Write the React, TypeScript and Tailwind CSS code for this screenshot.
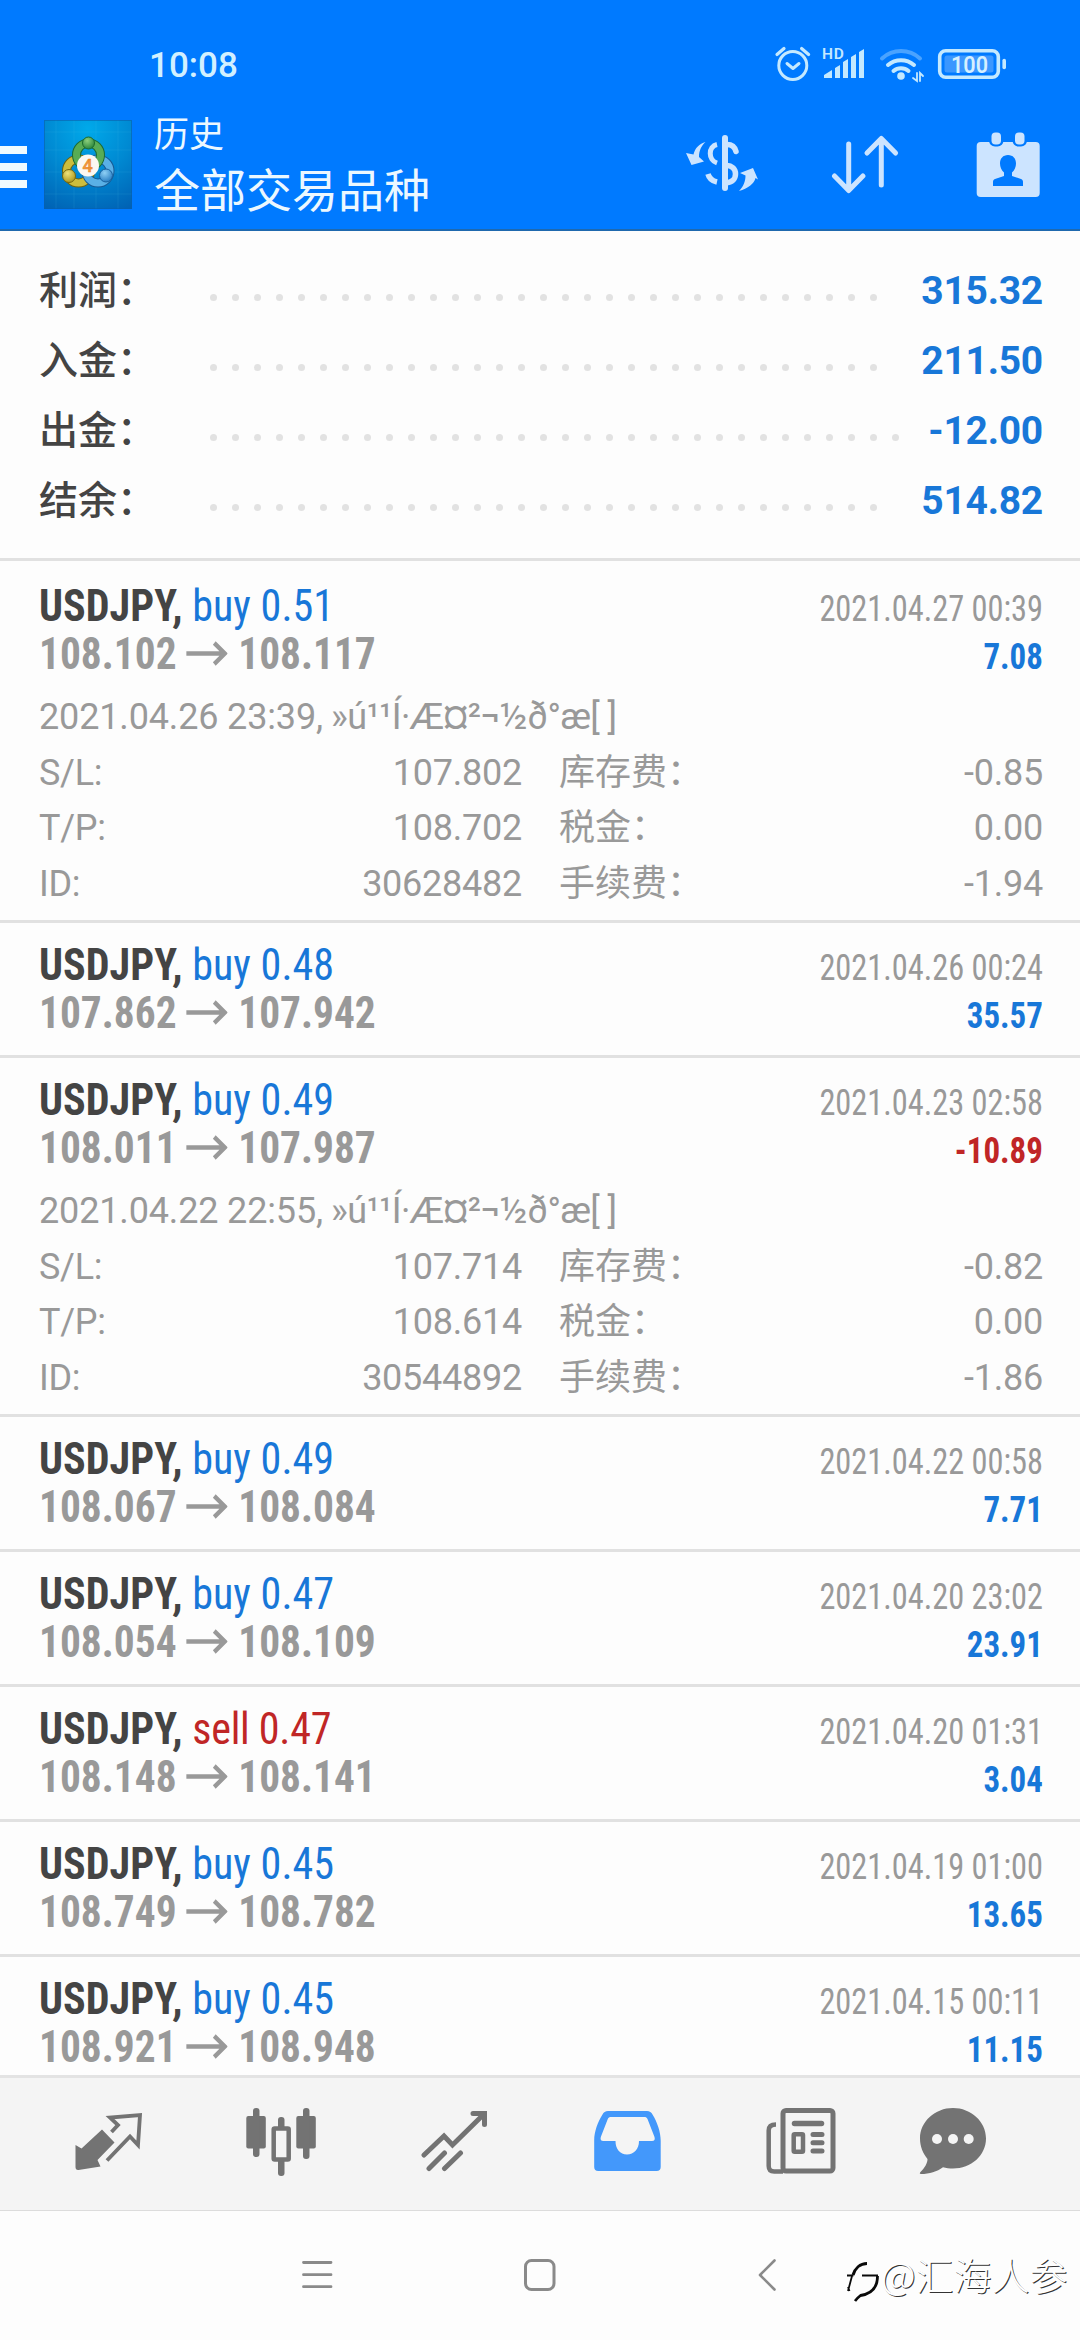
import React from 'react';

type Details = {
  opened: string;
  sl: string;
  tp: string;
  id: string;
  swap: string;
  tax: string;
  commission: string;
};

type Deal = {
  symbol: string;
  side: 'buy' | 'sell';
  volume: string;
  open: string;
  close: string;
  time: string;
  profit: string;
  details?: Details;
};

const COMMENT = '»ú¹¹Í·Æ¤²¬½ð°æ[ ]';

const summary = [
  { label: '利润：', value: '315.32', dots: 31 },
  { label: '入金：', value: '211.50', dots: 31 },
  { label: '出金：', value: '-12.00', dots: 32 },
  { label: '结余：', value: '514.82', dots: 31 },
];

const deals: Deal[] = [
  {
    symbol: 'USDJPY', side: 'buy', volume: '0.51', open: '108.102', close: '108.117', time: '2021.04.27 00:39', profit: '7.08',
    details: { opened: '2021.04.26 23:39,', sl: '107.802', tp: '108.702', id: '30628482', swap: '-0.85', tax: '0.00', commission: '-1.94' },
  },
  { symbol: 'USDJPY', side: 'buy', volume: '0.48', open: '107.862', close: '107.942', time: '2021.04.26 00:24', profit: '35.57' },
  {
    symbol: 'USDJPY', side: 'buy', volume: '0.49', open: '108.011', close: '107.987', time: '2021.04.23 02:58', profit: '-10.89',
    details: { opened: '2021.04.22 22:55,', sl: '107.714', tp: '108.614', id: '30544892', swap: '-0.82', tax: '0.00', commission: '-1.86' },
  },
  { symbol: 'USDJPY', side: 'buy', volume: '0.49', open: '108.067', close: '108.084', time: '2021.04.22 00:58', profit: '7.71' },
  { symbol: 'USDJPY', side: 'buy', volume: '0.47', open: '108.054', close: '108.109', time: '2021.04.20 23:02', profit: '23.91' },
  { symbol: 'USDJPY', side: 'sell', volume: '0.47', open: '108.148', close: '108.141', time: '2021.04.20 01:31', profit: '3.04' },
  { symbol: 'USDJPY', side: 'buy', volume: '0.45', open: '108.749', close: '108.782', time: '2021.04.19 01:00', profit: '13.65' },
  { symbol: 'USDJPY', side: 'buy', volume: '0.45', open: '108.921', close: '108.948', time: '2021.04.15 00:11', profit: '11.15' },
];

const StatusIcons = () => (
  <svg width="234" height="40" viewBox="774 45 234 40" fill="none" stroke="#c4e9ff" strokeLinecap="round">
    {/* alarm */}
    <circle cx="792.8" cy="65.5" r="14" strokeWidth="3" />
    <path d="M787 63.5l6 5 6-5" strokeWidth="3" strokeLinejoin="round" />
    <path d="M777 54.5l7-6M801.600 48.500l7 6" strokeWidth="3.200" />
    {/* signal */}
    <text x="822" y="59" fontSize="15.500" fontWeight="600" fontFamily="Roboto, sans-serif" fill="#c4e9ff" stroke="none" letterSpacing="0.800">HD</text>
    <path d="M824 78v-3l8-5v8zM835 78V68l5-3v13zM843 78V62l5-3v19zM851 78V57l5-3v24zM859 78V52l5-3v29z" fill="#c4e9ff" stroke="none" />
    {/* wifi */}
    <path d="M882 58.500a28 28 0 0 1 38 0" stroke="#4aa3ff" strokeWidth="4" />
    <path d="M888 65a20 20 0 0 1 26 0" strokeWidth="4" />
    <path d="M893.500 71a11.500 11.500 0 0 1 15 0" strokeWidth="4" />
    <circle cx="901" cy="76" r="3.800" fill="#c4e9ff" stroke="none" />
    <path d="M917 73v8l-4-3M920 81v-8l3 3" strokeWidth="1.800" />
    {/* battery */}
    <rect x="939.700" y="50.700" width="58.600" height="26.600" rx="6" strokeWidth="3.600" />
    <rect x="944.500" y="55.500" width="49" height="17" rx="2.500" fill="#3b97ff" stroke="none" />
    <path d="M1004.200 60.500v7" strokeWidth="3.600" />
    <text x="969.500" y="72.500" fontSize="24" fontWeight="600" fontFamily="Roboto, sans-serif" textAnchor="middle" fill="#d5f0ff" stroke="none" textLength="37" lengthAdjust="spacingAndGlyphs">100</text>
  </svg>
);

const AppLogo = () => (
  <svg width="88" height="89" viewBox="0 0 88 89">
    <defs>
      <radialGradient id="sky" cx="0.5" cy="0.1" r="1">
        <stop offset="0" stopColor="#00a9ea" />
        <stop offset="0.5" stopColor="#0089d2" />
        <stop offset="1" stopColor="#0062b4" />
      </radialGradient>
      <radialGradient id="green" cx="0.4" cy="0.3" r="0.8">
        <stop offset="0" stopColor="#8ccf7c" />
        <stop offset="1" stopColor="#1f7d33" />
      </radialGradient>
      <radialGradient id="gold" cx="0.4" cy="0.3" r="0.8">
        <stop offset="0" stopColor="#efe27a" />
        <stop offset="1" stopColor="#a58f12" />
      </radialGradient>
      <radialGradient id="blue" cx="0.4" cy="0.3" r="0.8">
        <stop offset="0" stopColor="#8fd0f5" />
        <stop offset="1" stopColor="#1c74bd" />
      </radialGradient>
    </defs>
    <rect width="88" height="89" fill="url(#sky)" />
    <path d="M12 0v89M30 0v89M52 0v89M74 0v89M0 12h88M0 30h88M0 52h88M0 74h88" stroke="#5cc4ee" strokeOpacity="0.12" />
    <rect x="0.500" y="0.500" width="87" height="88" fill="none" stroke="#0a5fae" strokeOpacity="0.600" />
    <g fill="none">
      <circle cx="34.500" cy="51" r="12" stroke="#6d6411" strokeWidth="9" />
      <circle cx="34.500" cy="51" r="12" stroke="#cdbd3c" strokeWidth="7" />
      <circle cx="54" cy="51" r="12" stroke="#175a94" strokeWidth="9" />
      <circle cx="54" cy="51" r="12" stroke="#5ab0e6" strokeWidth="7" />
      <circle cx="44.500" cy="35" r="12" stroke="#1c6a35" strokeWidth="9" />
      <circle cx="44.500" cy="35" r="12" stroke="#58ac55" strokeWidth="7" />
    </g>
    <circle cx="44.500" cy="23" r="6" fill="url(#green)" stroke="#1a6a2d" />
    <circle cx="25" cy="56" r="6.500" fill="url(#gold)" stroke="#75670f" />
    <circle cx="62" cy="55.500" r="6.500" fill="url(#blue)" stroke="#17609f" />
    <circle cx="44" cy="45.500" r="11" fill="#fbf7f2" />
    <text x="43.500" y="52" fontSize="18" fontWeight="500" fontFamily="Roboto, sans-serif" textAnchor="middle" fill="#f39a3f" stroke="#e8852a" strokeWidth="0.500">4</text>
  </svg>
);

const CurrencyIcon = () => (
  <svg width="74" height="60" viewBox="685 134 74 60" fill="none" stroke="#cce4ff">
    <path d="M725 138v50" strokeWidth="6" strokeLinecap="round" />
    <path d="M717 144.500c-9 2-9 15.500 0 18.500" strokeWidth="5" />
    <path d="M727 144.500c5 0 8 3 9 7" strokeWidth="5.500" strokeLinecap="round" />
    <path d="M708 174c1 4 4.500 7 9 8" strokeWidth="5.500" />
    <path d="M726 165.500c6.500 0 9.500 4 9.500 8.500s-3 8.500-9.500 8.500" strokeWidth="5.500" />
    <path d="M705.500 142c-6 1.500-10.500 6-12 12.500l-7.500-1.500 5.500 12 12.500-3.500-5-4.500c0-6 2-11 6.500-15z" fill="#cce4ff" stroke="none" />
    <path d="M739 191c9-2.500 15-7 16.500-13l2.500 1.500-5-11.500-13 5 5.500 2.500c0 6-2 11-6.500 15.500z" fill="#cce4ff" stroke="none" />
  </svg>
);

const SortIcon = () => (
  <svg width="70" height="62" viewBox="831 133 70 62" fill="none" stroke="#cce4ff" strokeWidth="5" strokeLinecap="round" strokeLinejoin="round">
    <path d="M848.700 144v46M834.500 176l14.200 14.500 14.200-14.500" />
    <path d="M881.300 185v-46M867 153l14.300-14.500L895.600 153" />
  </svg>
);

const CalendarIcon = () => (
  <svg width="64" height="66" viewBox="976 131.500 64 66">
    <rect x="976.700" y="141.500" width="63" height="55" rx="4" fill="#cce4ff" />
    <rect x="989" y="129" width="14.500" height="17" rx="6" fill="#007aff" />
    <rect x="1012.500" y="129" width="14.500" height="17" rx="6" fill="#007aff" />
    <rect x="991.500" y="132" width="9.500" height="12" rx="4" fill="#cce4ff" />
    <rect x="1015" y="132" width="9.500" height="12" rx="4" fill="#cce4ff" />
    <path d="M1008 154.500c5 0 8 3.500 8 8.500 0 3.500-1.500 7-4 9v3.500l9 3c1.500.500 2 1.500 2 3v4h-30v-4c0-1.500.500-2.500 2-3l9-3V172c-2.500-2-4-5.500-4-9 0-5 3-8.500 8-8.500z" fill="#007aff" />
  </svg>
);

const Header = () => (
  <header className="h-[231px] shrink-0 bg-[#007aff] border-b-2 border-[#1f69ae]">
    <div className="h-[100px] pl-[149px] pr-[72px] pt-[45px] flex items-start justify-between">
      <span className="mt-px text-[35px] leading-[40px] font-medium text-[#d2f0ff]">10:08</span>
      <StatusIcons />
    </div>
    <div className="h-[129px] flex items-start pr-10">
      <div className="w-[27px] pt-[46px] flex flex-col gap-[9px]">
        <span className="h-2 bg-[#f0faff]" />
        <span className="h-2 bg-[#f0faff]" />
        <span className="h-2 bg-[#f0faff]" />
      </div>
      <div className="ml-[17px] mt-5">
        <AppLogo />
      </div>
      <div className="ml-[22px] mt-[12px] text-[#ecf8ff]">
        <div className="text-[35px] leading-[48px]">历史</div>
        <h1 className="text-[46px] leading-[62px]">全部交易品种</h1>
      </div>
      <div className="ml-auto mt-[32px] flex items-start">
        <div className="mt-[2px] mr-[72px]"><CurrencyIcon /></div>
        <div className="mt-[1px] mr-[75px]"><SortIcon /></div>
        <CalendarIcon />
      </div>
    </div>
  </header>
);

const SummaryRow = ({ label, value, dots }: { label: string; value: string; dots: number }) => (
  <div className="h-[70px] leading-[70px] flex text-[39px]">
    <span className="w-[171px] font-medium text-[#444]">{label}</span>
    <span className="flex gap-[15px] pt-[38px]">
      {Array.from({ length: dots }, (_, i) => (
        <span key={i} className="size-[7px] rounded-full bg-[#e2e2e2]" />
      ))}
    </span>
    <span className="ml-auto font-bold tracking-[-0.250px] text-[#1877d8]">{value}</span>
  </div>
);

const DetailRow = ({ left, leftValue, right, rightValue }: Record<'left' | 'leftValue' | 'right' | 'rightValue', string>) => (
  <div className="flex">
    <span className="tracking-[-0.300px]">{left}</span>
    <span className="ml-auto tracking-[-0.250px]">{leftValue}</span>
    <span className="ml-[37px] w-[200px]">{right}</span>
    <span className="w-[284px] text-right tracking-[-0.250px]">{rightValue}</span>
  </div>
);

const DealRow = ({ deal }: { deal: Deal }) => {
  const { details } = deal;
  return (
    <li className="border-t-[3px] first:border-t-0 border-[#e1e1e1] pl-[39px] pr-[37px] pt-[18px] first:pt-[21px] pb-[18px] last:pb-0">
      <div className="flex justify-between leading-[48px] [font-stretch:75%]">
        <div className="text-[45px]">
          <div className="origin-left scale-x-[0.936] text-[#444]">
            <b className="font-bold">{deal.symbol},</b>{' '}
            <span className={deal.side === 'buy' ? 'text-[#1877d8]' : 'text-[#c02626] tracking-[-0.300px]'}>
              {deal.side} {deal.volume}
            </span>
          </div>
          <div className="origin-left scale-x-[0.92] flex items-center font-bold text-[#999]">
            {deal.open}
            <svg className="ml-[10px] mr-[12px]" width="45" height="26" viewBox="0 0 45 26" fill="none" stroke="#999" strokeWidth="4.500">
              <path d="M0 12.500h42M30.500 2l11.500 10.500-11.500 10.500" />
            </svg>
            {deal.close}
          </div>
        </div>
        <div className="text-right text-[36px]">
          <div className="origin-right scale-x-[0.898] text-[#999] pt-[3px] h-[48px]">{deal.time}</div>
          <div className={`origin-right scale-x-[0.915] font-bold pt-[3px] h-[48px] ${deal.profit.startsWith('-') ? 'text-[#c02626]' : 'text-[#1877d8]'}`}>
            {deal.profit}
          </div>
        </div>
      </div>
      {details && (
        <div className="mt-[12px] -mb-[10px] text-[36px] leading-[55.500px] text-[#999]">
          <div>
            <span className="tracking-[-0.150px]">{details.opened}</span>
            <span className="ml-[8px] tracking-[-0.600px]">{COMMENT}</span>
          </div>
          <DetailRow left="S/L:" leftValue={details.sl} right="库存费：" rightValue={details.swap} />
          <DetailRow left="T/P:" leftValue={details.tp} right="税金：" rightValue={details.tax} />
          <DetailRow left="ID:" leftValue={details.id} right="手续费：" rightValue={details.commission} />
        </div>
      )}
    </li>
  );
};

const TabBar = () => (
  <nav className="h-[136px] shrink-0 border-t-[3px] border-b border-t-[#e3e3e3] border-b-[#dcdcdc] bg-[#f4f4f4] flex items-start pl-[75px] pt-[29px]">
    {/* quotes */}
    <svg className="mt-[5px]" width="68" height="60" viewBox="75 2112 68 60" fill="#737373">
      <path d="M75.500 2145l6 3.500 20.500-19 12.500 13-17 17.500 3 6.500-22 3.500c-2 .200-3-.800-3-3z" />
      <path d="M111.500 2132l6.500-7-8-7.500 30-2.500-2 30-8-8.500-23 24" fill="none" stroke="#737373" strokeWidth="3.800" />
    </svg>
    {/* chart */}
    <svg className="ml-[102px]" width="72" height="70" viewBox="245 2107 72 70" fill="#737373">
      <rect x="246.300" y="2116" width="19.500" height="32.500" rx="2" />
      <rect x="253" y="2108" width="6.500" height="49" rx="3" />
      <rect x="296.300" y="2116" width="19.500" height="32.500" rx="2" />
      <rect x="303" y="2108" width="6.500" height="51" rx="3" />
      <rect x="278" y="2117" width="6.500" height="59" rx="3" />
      <rect x="273.700" y="2128.500" width="15" height="31" rx="1" fill="#f4f4f4" stroke="#737373" strokeWidth="4.500" />
    </svg>
    {/* trade */}
    <svg className="ml-[104px] mt-[3px]" width="68" height="62" viewBox="421 2110 68 62" fill="none" stroke="#737373" strokeWidth="5" strokeLinecap="round">
      <path d="M424 2155l20-19 8.500 9L484 2114" strokeLinejoin="miter" />
      <path d="M473 2113.500h11.500v11" />
      <path d="M429 2168.500l15.500-15.500M444.500 2168.500l16-15.500" />
    </svg>
    {/* history */}
    <svg className="ml-[105px] mt-[3px]" width="68" height="62" viewBox="594 2110 68 62">
      <path fillRule="evenodd" fill="#4398fb" d="M608 2111h39c2.500 0 4.500 1.500 5.500 3.500 5 8 8.200 18 8.200 26v26.500c0 2.500-1.500 4-4 4h-58.500c-2.500 0-4-1.500-4-4V2140c0-8 3.500-18 8.300-25.500 1-2 3-3.500 5.500-3.500zM611 2117c-1.500 0-2.500.600-3.200 2l-7 18c-.700 2.500.200 4 2.500 4h12.200c0 8 4.500 13.500 11.500 13.500s12-5.500 12-13.500h13c2.500 0 3.200-1.500 2.500-4l-7-18c-.700-1.400-1.700-2-3.200-2z" />
    </svg>
    {/* news */}
    <svg className="ml-[103px]" width="72" height="68" viewBox="765 2107 72 68" fill="none" stroke="#737373">
      <rect x="783" y="2110.500" width="50" height="60.500" rx="3" strokeWidth="5" />
      <path d="M776 2124.500c-5 0-7.300 2-7.300 6V2166c0 3.500 2 5.500 5.500 5.500H783" strokeWidth="4.500" />
      <path d="M794.500 2123.500h27" strokeWidth="5.500" strokeLinecap="round" />
      <rect x="793.700" y="2134.200" width="9.300" height="17.500" rx="1" strokeWidth="4.500" />
      <path d="M813 2134.500h9M813 2142.700h9M813 2151h9" strokeWidth="5" strokeLinecap="round" />
    </svg>
    {/* chat */}
    <svg className="ml-[82px]" width="68" height="68" viewBox="919 2107 68 68">
      <path d="M953 2108c18 0 33 13.500 33 30.500s-15 30-33 30c-3.500 0-7-.500-10-1.300-6 4.300-13.500 6.800-22 6.800-1.500 0-1.500-1-.500-2 4-4 7-8.500 7-13-4.500-5.500-7.500-12.500-7.500-20.500 0-17 15-30.500 33-30.500z" fill="#737373" />
      <circle cx="937" cy="2139" r="5" fill="#f4f4f4" />
      <circle cx="953" cy="2139" r="5" fill="#f4f4f4" />
      <circle cx="968.700" cy="2139" r="5" fill="#f4f4f4" />
    </svg>
  </nav>
);

const SystemNav = () => (
  <footer className="h-[129px] shrink-0 flex items-start bg-[#fdfdfd] pl-[301px] pt-[47px]">
    <svg width="32" height="34" viewBox="301 2258 32 34" fill="none" stroke="#8a8a8a" strokeWidth="2.800" strokeLinecap="round">
      <path d="M303.500 2262.500h27.500M303.500 2274.700h27.500M303.500 2286.700h27.500" />
    </svg>
    <svg className="ml-[190px]" width="34" height="34" viewBox="523 2258 34 34" fill="none" stroke="#8a8a8a" strokeWidth="3">
      <rect x="525.500" y="2260.500" width="28.500" height="29" rx="6" />
    </svg>
    <svg className="ml-[200px]" width="22" height="34" viewBox="757 2258 22 34" fill="none" stroke="#8a8a8a" strokeWidth="2.600" strokeLinecap="round" strokeLinejoin="round">
      <path d="M774.500 2260.500L760 2275l14.500 14.500" />
    </svg>
    <div className="ml-[66px] flex items-start">
      <svg width="36" height="46" viewBox="845 2259 36 46" fill="none" stroke="#0a0a0a">
        <path d="M853 2276c2-6.500 7-11.500 14-11.500" strokeWidth="3" />
        <path d="M847 2276.500h6.500M862 2276.500h16" strokeWidth="2" />
        <path d="M852 2277l-4 15M848 2288l1.500 4" strokeWidth="1.800" />
        <path d="M877.500 2277c0 12-7 18-17 19.500-2 1.500-3.500 3-5.500 5.500" strokeWidth="2.800" />
      </svg>
      <span className="-mt-[12px] whitespace-nowrap font-['Noto_Sans_CJK_SC',sans-serif] font-light text-[38px] leading-[56px] text-white [text-shadow:1px_1px_0_#333]">@汇海人参</span>
    </div>
  </footer>
);

export default function App() {
  return (
    <div className="w-[1080px] h-[2340px] flex flex-col overflow-hidden bg-[#fdfdfd] font-['Roboto','Noto_Sans_CJK_SC',sans-serif]">
      <Header />
      <section className="h-[330px] shrink-0 border-b-[3px] border-[#e1e1e1] pl-[39px] pr-[37px] pt-[25px]">
        {summary.map(row => <SummaryRow key={row.label} {...row} />)}
      </section>
      <ul className="flex-1 min-h-0 overflow-hidden">
        {deals.map(deal => <DealRow key={deal.time} deal={deal} />)}
      </ul>
      <TabBar />
      <SystemNav />
    </div>
  );
}
